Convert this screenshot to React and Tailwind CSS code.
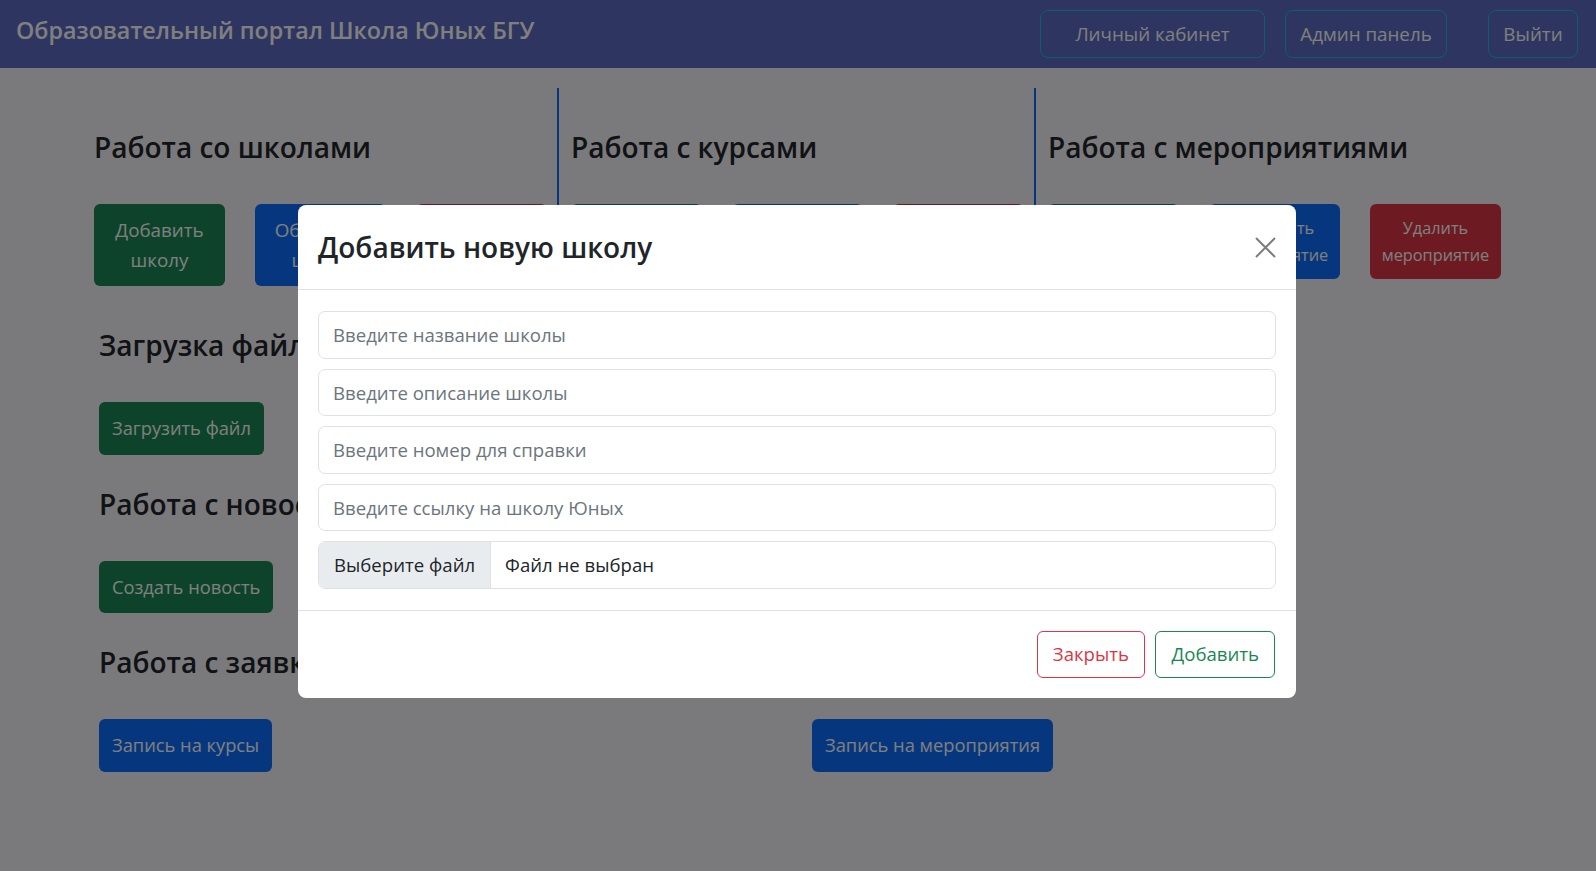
import React from "react";

const font = "font-['Open_Sans','Noto_Sans',sans-serif]";

const SectionButton = ({ color, children }) => (
  <button
    className={`h-[52.5px] px-[12px] rounded-[6px] border border-transparent text-white text-[18.3px] leading-[30px] ${color}`}
  >
    {children}
  </button>
);

const Column = ({ title, items, small, first }) => (
  <div
    className={`pt-[42px] pb-[12px] ${
      first ? "pl-[14px]" : "border-l-2 border-[#0d6efd] pl-[12px]"
    }`}
  >
    <h3 className="text-[28px] leading-[34px] font-semibold text-[#212529]">
      {title}
    </h3>
    <div className="mt-[40px] flex gap-[30px] items-start">
      {items.map((it) => (
        <button
          key={it.label}
          className={`w-[131px] py-[10px] px-[10px] rounded-[6px] border border-transparent text-white text-center ${
            small ? "text-[16.3px] leading-[26.5px]" : "text-[18.8px] leading-[30px]"
          } ${it.color}`}
        >
          {it.label}
        </button>
      ))}
    </div>
  </div>
);

const Field = ({ placeholder }) => (
  <input
    className="h-[47.5px] w-full rounded-[7px] border border-[#dee2e6] px-[14px] text-[18.6px] text-[#212529] placeholder:text-[#6c757d] outline-none"
    placeholder={placeholder}
  />
);

const App = () => {
  const green = "bg-[#198754]";
  const blue = "bg-[#0d6efd]";
  const red = "bg-[#dc3545]";
  return (
    <div className={`relative min-h-[871px] bg-[#f4f5f9] ${font}`}>
      <nav className="h-[68px] bg-[#5c6ac0] flex justify-between pl-[16px] pr-[18px]">
        <a className="mt-[12px] text-white text-[23.3px] leading-[36px] font-semibold">
          Образовательный портал Школа Юных БГУ
        </a>
        <div className="flex items-center">
          <button className="w-[225px] h-[47.5px] rounded-[8px] border border-[#1abcdc] text-white text-[18.8px]">
            Личный кабинет
          </button>
          <button className="ml-[20px] w-[162px] h-[47.5px] rounded-[8px] border border-[#1abcdc] text-white text-[18.8px]">
            Админ панель
          </button>
          <button className="ml-[41px] w-[90px] h-[47.5px] rounded-[8px] border border-[#1abcdc] text-white text-[18.8px]">
            Выйти
          </button>
        </div>
      </nav>

      <div className="w-[1431px] ml-[80px] mt-[20px] grid grid-cols-3">
        <Column
          first
          title="Работа со школами"
          items={[
            { label: "Добавить школу", color: green },
            { label: "Обновить школу", color: blue },
            { label: "Удалить школу", color: red },
          ]}
        />
        <Column
          title="Работа с курсами"
          items={[
            { label: "Добавить курс", color: green },
            { label: "Обновить курс", color: blue },
            { label: "Удалить курс", color: red },
          ]}
        />
        <Column
          small
          title="Работа с мероприятиями"
          items={[
            { label: "Добавить мероприятие", color: green },
            { label: "Обновить мероприятие", color: blue },
            { label: "Удалить мероприятие", color: red },
          ]}
        />
      </div>

      <div className="w-[1426px] mx-auto px-[14px] pt-[30px]">
        <h3 className="text-[28px] leading-[34px] font-semibold text-[#212529]">
          Загрузка файлов
        </h3>
        <div className="mt-[40px]">
          <SectionButton color={green}>Загрузить файл</SectionButton>
        </div>
        <h3 className="mt-[32px] text-[28px] leading-[34px] font-semibold text-[#212529]">
          Работа с новостями
        </h3>
        <div className="mt-[40px]">
          <SectionButton color={green}>Создать новость</SectionButton>
        </div>
        <h3 className="mt-[32px] text-[28px] leading-[34px] font-semibold text-[#212529]">
          Работа с заявками
        </h3>
        <div className="mt-[40px] grid grid-cols-2 gap-[28px]">
          <div>
            <SectionButton color={blue}>Запись на курсы</SectionButton>
          </div>
          <div>
            <SectionButton color={blue}>Запись на мероприятия</SectionButton>
          </div>
        </div>
      </div>

      {/* modal backdrop */}
      <div className="absolute inset-0 bg-[rgba(0,0,0,0.5)]" />

      <div className="absolute inset-0 flex">
        <div className="ml-[298px] mt-[205px] self-start w-[998px] bg-white rounded-[8px] overflow-hidden">
          <div className="h-[85px] px-[20px] flex items-center justify-between border-b border-[#dee2e6]">
            <h3 className="text-[28px] leading-[34px] font-semibold text-[#212529]">
              Добавить новую школу
            </h3>
            <button className="w-[22px] h-[22px] flex items-center justify-center">
              <svg width="21" height="21" viewBox="0 0 21 21">
                <path
                  d="M1 1 L20 20 M20 1 L1 20"
                  stroke="#7d7d7d"
                  strokeWidth="2"
                  fill="none"
                />
              </svg>
            </button>
          </div>
          <div className="px-[20px] pt-[21px] pb-[21px] flex flex-col gap-[10px]">
            <Field placeholder="Введите название школы" />
            <Field placeholder="Введите описание школы" />
            <Field placeholder="Введите номер для справки" />
            <Field placeholder="Введите ссылку на школу Юных" />
            <div className="h-[47.5px] flex rounded-[7px] border border-[#dee2e6] overflow-hidden text-[18.6px] text-[#212529]">
              <span className="bg-[#e9ecef] border-r border-[#dee2e6] px-[15px] flex items-center">
                Выберите файл
              </span>
              <span className="px-[14px] flex items-center">Файл не выбран</span>
            </div>
          </div>
          <div className="h-[88px] border-t border-[#dee2e6] px-[21px] flex items-center justify-end gap-[10.5px]">
            <button className="h-[47px] px-[15px] rounded-[6px] border border-[#dc3545] text-[#dc3545] text-[18.6px]">
              Закрыть
            </button>
            <button className="h-[47px] px-[15px] rounded-[6px] border border-[#198754] text-[#198754] text-[18.6px]">
              Добавить
            </button>
          </div>
        </div>
      </div>
    </div>
  );
};

export default App;
